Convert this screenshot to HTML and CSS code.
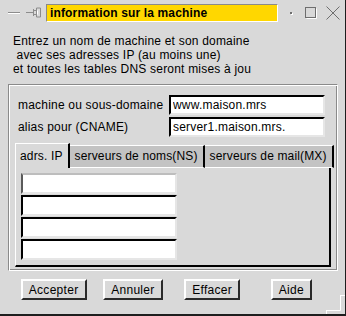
FILE: index.html
```html
<!DOCTYPE html>
<html lang="fr">
<head>
    <meta charset="UTF-8">
    <title>information sur la machine</title>
    <link rel="stylesheet" href="styles.css">
</head>
<body>
    <div class="window">
        <div class="titlebar">
            <svg class="icon-min" width="12" height="4" viewBox="0 0 12 4">
                <rect x="0" y="1" width="12" height="1" fill="#8c8c8c"/>
                <rect x="0" y="2" width="12" height="1" fill="#ffffff"/>
            </svg>
            <svg class="icon-pin" width="15" height="11" viewBox="0 0 15 11">
                <path d="M0 5.5H7M7.5 2V9M8 3.5H10M8 7.5H10M10.5 1V10H14.5V1Z" stroke="#8c8c8c" fill="none"/>
                <path d="M11.5 3.5V7.5" stroke="#ffffff"/>
            </svg>
            <div class="title">information sur la machine</div>
            <span class="icon-dot"></span>
            <svg class="icon-max" width="12" height="12" viewBox="0 0 12 12">
                <rect x="0.5" y="0.5" width="10" height="10" fill="none" stroke="#6e6e6e"/>
                <path d="M1.5 11.5H11.5V1.5" stroke="#ffffff" fill="none"/>
            </svg>
            <svg class="icon-close" width="14" height="14" viewBox="0 0 14 14">
                <path d="M0.5 0.5L13.5 13.5M13.5 0.5L0.5 13.5" stroke="#6e6e6e" fill="none"/>
            </svg>
        </div>

        <div class="intro">
            Entrez un nom de machine et son domaine<br>
            &nbsp;avec ses adresses IP (au moins une)<br>
            et toutes les tables DNS seront mises à jou
        </div>

        <div class="frame">
            <div class="form-row">
                <label for="machine">machine ou sous-domaine</label>
                <input type="text" id="machine" class="entry" value="www.maison.mrs">
            </div>
            <div class="form-row">
                <label for="alias">alias pour (CNAME)</label>
                <input type="text" id="alias" class="entry" value="server1.maison.mrs.">
            </div>

            <div class="notebook">
                <div class="tabs">
                    <div class="tab active">adrs. IP</div>
                    <div class="tab">serveurs de noms(NS)</div>
                    <div class="tab last">serveurs de mail(MX)</div>
                </div>
                <div class="page">
                    <input type="text" class="entry list-entry first">
                    <input type="text" class="entry list-entry">
                    <input type="text" class="entry list-entry">
                    <input type="text" class="entry list-entry">
                </div>
            </div>
        </div>

        <div class="buttons">
            <div class="cell"><button class="btn">Accepter</button></div>
            <div class="cell"><button class="btn">Annuler</button></div>
            <div class="cell"><button class="btn">Effacer</button></div>
            <div class="cell"><button class="btn">Aide</button></div>
        </div>

        <svg class="grip" width="19" height="19" viewBox="0 0 19 19">
            <path d="M14.5 0V15.5H0" stroke="#ffffff" fill="none"/>
            <path d="M15 0.5H19M0.5 16V19" stroke="#ffffff" fill="none"/>
        </svg>
    </div>
</body>
</html>
```

FILE: styles.css
```css
body {
    margin: 0;
    padding: 0;
    background-color: #d9d9d9;
    font-family: "Liberation Sans", Arial, sans-serif;
    font-size: 12px;
    color: #000;
}

.window {
    position: relative;
    box-sizing: border-box;
    width: 346px;
    height: 316px;
    background-color: #d9d9d9;
    border-right: 1px solid #1e1e1e;
    border-bottom: 2px solid #1e1e1e;
    overflow: hidden;
}

/* title bar */
.titlebar {
    display: flex;
    align-items: center;
    height: 25px;
    padding-left: 8px;
}

.icon-min {
    display: block;
}

.icon-pin {
    display: block;
    margin-left: 6px;
}

.title {
    box-sizing: border-box;
    width: 232px;
    height: 18px;
    margin-left: 5px;
    padding-left: 3px;
    background-color: #ffd700;
    border-top: 1px solid #8a8a8a;
    border-left: 1px solid #8a8a8a;
    border-right: 1px solid #ffffff;
    border-bottom: 1px solid #ffffff;
    font-weight: bold;
    font-size: 12px;
    letter-spacing: 0.15px;
    line-height: 16px;
    white-space: nowrap;
}

.icon-dot {
    display: block;
    width: 2px;
    height: 2px;
    margin-left: 12px;
    background-color: #6e6e6e;
    box-shadow: 1px 1px 0 #ffffff;
}

.icon-max {
    display: block;
    margin-left: 13px;
}

.icon-close {
    display: block;
    margin-left: 9px;
}

/* intro text */
.intro {
    padding: 9px 0 0 13px;
    line-height: 14px;
    letter-spacing: 0.2px;
    white-space: nowrap;
}

/* etched frame */
.frame {
    box-sizing: border-box;
    width: 330px;
    margin: 8px 0 0 8px;
    padding: 10px 6px 3px 6px;
    border: 1px solid;
    border-color: #8a8a8a #ffffff #ffffff #8a8a8a;
    box-shadow: inset 1px 1px 0 #ffffff, inset -1px -1px 0 #8a8a8a;
}

.form-row {
    display: grid;
    grid-template-columns: 151px 156px;
    align-items: center;
    padding-left: 3px;
    margin-bottom: 2px;
}

.form-row label {
    letter-spacing: 0.2px;
    white-space: nowrap;
}

.entry {
    box-sizing: border-box;
    width: 156px;
    height: 20px;
    margin: 0;
    padding: 0 0 0 2px;
    background-color: #fff;
    border: 2px solid;
    border-color: #000 #e6e6e6 #e6e6e6 #000;
    font-family: "Liberation Sans", Arial, sans-serif;
    font-size: 12px;
    letter-spacing: 0.2px;
    color: #000;
    outline: none;
}

/* notebook */
.notebook {
    margin-top: 6px;
}

.tabs {
    display: flex;
    align-items: flex-end;
    height: 25px;
}

.tab {
    box-sizing: border-box;
    height: 23px;
    padding: 0 5px 0 5px;
    background-color: #c3c3c3;
    border-top: 1px solid #ffffff;
    border-right: 2px solid #000;
    border-bottom: 1px solid #ffffff;
    line-height: 21px;
    letter-spacing: 0.15px;
    white-space: nowrap;
}

.tab.active {
    height: 25px;
    background-color: #d9d9d9;
    border-left: 1px solid #ffffff;
    border-bottom: none;
    padding-left: 4px;
    line-height: 25px;
}

.tab.last {
    flex: 1;
}

.page {
    box-sizing: border-box;
    height: 99px;
    padding: 5px 0 0 5px;
    border-left: 1px solid #ffffff;
    border-right: 2px solid #000;
    border-bottom: 2px solid #000;
}

.list-entry {
    display: block;
    height: 21px;
    margin-bottom: 1px;
}

.list-entry.first {
    border-color: #bdbdbd #e6e6e6 #e6e6e6 #5a5a5a;
}

/* buttons */
.buttons {
    display: grid;
    grid-template-columns: repeat(4, 1fr);
    justify-items: center;
    width: 317px;
    margin: 8px 0 0 14px;
}

.btn {
    box-sizing: border-box;
    height: 21px;
    padding: 0 6px;
    background-color: #d9d9d9;
    border: 2px solid;
    border-color: #ffffff #2a2a2a #2a2a2a #ffffff;
    font-family: "Liberation Sans", Arial, sans-serif;
    font-size: 12px;
    letter-spacing: 0.3px;
    color: #000;
    cursor: pointer;
}

.grip {
    position: absolute;
    right: 0;
    bottom: 0;
}
```
